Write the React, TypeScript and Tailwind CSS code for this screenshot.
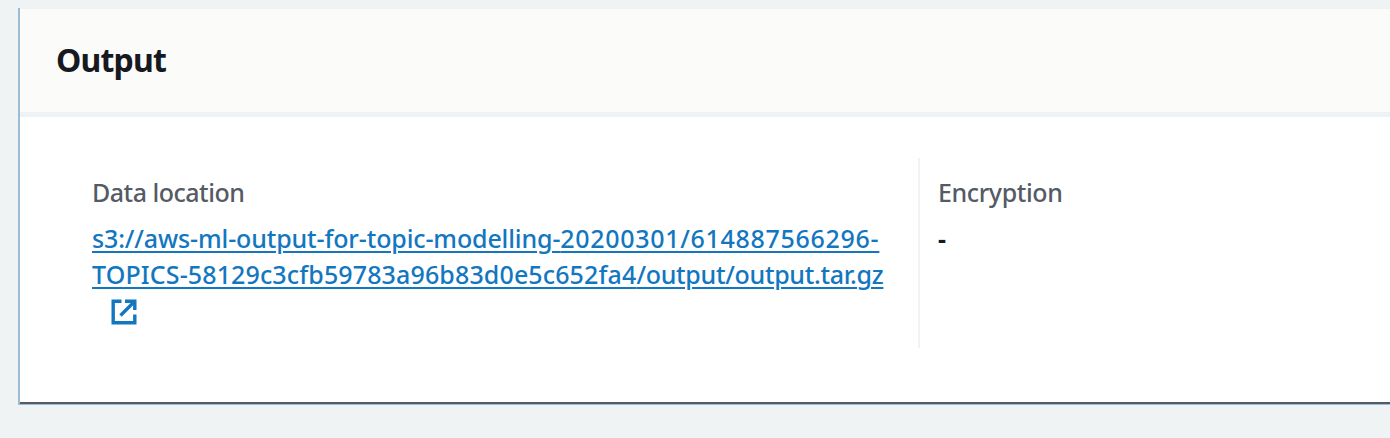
import React from "react";

function ExternalIcon() {
  return (
    <svg className="block h-[26px] w-[26px]" viewBox="0 0 26 26" fill="none" stroke="#1277bf" strokeWidth="3.4">
      <path d="M10.5 2.2H2.2V23.8H23.8V15.5" />
      <path d="M14 2.2H23.8V11" />
      <path d="M23 3L9.5 16.5" />
    </svg>
  );
}

export default function App() {
  return (
    <div className="h-[438px] w-full overflow-hidden bg-[#eff3f4] pl-[18px] pt-2 font-['Noto_Sans',sans-serif] text-[25px] font-medium leading-9">
      <section className="flex h-[397px] flex-col border-b border-l-2 border-[#9dbbd2] bg-white">
        <header className="flex h-[109px] shrink-0 items-center border-b-[5px] border-t border-[#edf2f4] bg-[#fbfbfa] pl-[36px]">
          <h2 className="pb-0.5 text-[32px] font-bold leading-none text-[#16191f]"><span className="tracking-[-0.8px]">Output</span></h2>
        </header>
        <div className="flex flex-1 border-b-2 border-[#545b64] pt-[41px]">
          <div className="h-[190px] w-[900px] shrink-0 border-r-2 border-[#eff3f4] pl-[72px] pt-[16px]">
            <div className="text-[#545b64]"><span className="tracking-[-0.5px]">Data location</span></div>
            <a className="mt-[10px] block whitespace-nowrap text-[#1277bf] underline decoration-2 underline-offset-[3px]">
              <span className="block"><span className="tracking-[-0.13px]">s3://aws-ml-output-for-topic-modelling-</span><span className="tracking-[0.7px]">20200301/614887566296-</span></span>
              <span className="block"><span className="tracking-[0.13px]">TOPICS-58129c3cfb59783a96b83d0e5c652fa4</span><span className="tracking-[-0.3px]">/output/output.tar.gz</span></span>
            </a>
            <div className="ml-[19px] mt-[7px]"><ExternalIcon /></div>
          </div>
          <div className="pl-[18px] pt-[16px]">
            <div className="text-[#545b64]"><span className="tracking-[-0.4px]">Encryption</span></div>
            <div className="mt-[10px] font-bold text-[#16191f]">-</div>
          </div>
        </div>
      </section>
    </div>
  );
}
